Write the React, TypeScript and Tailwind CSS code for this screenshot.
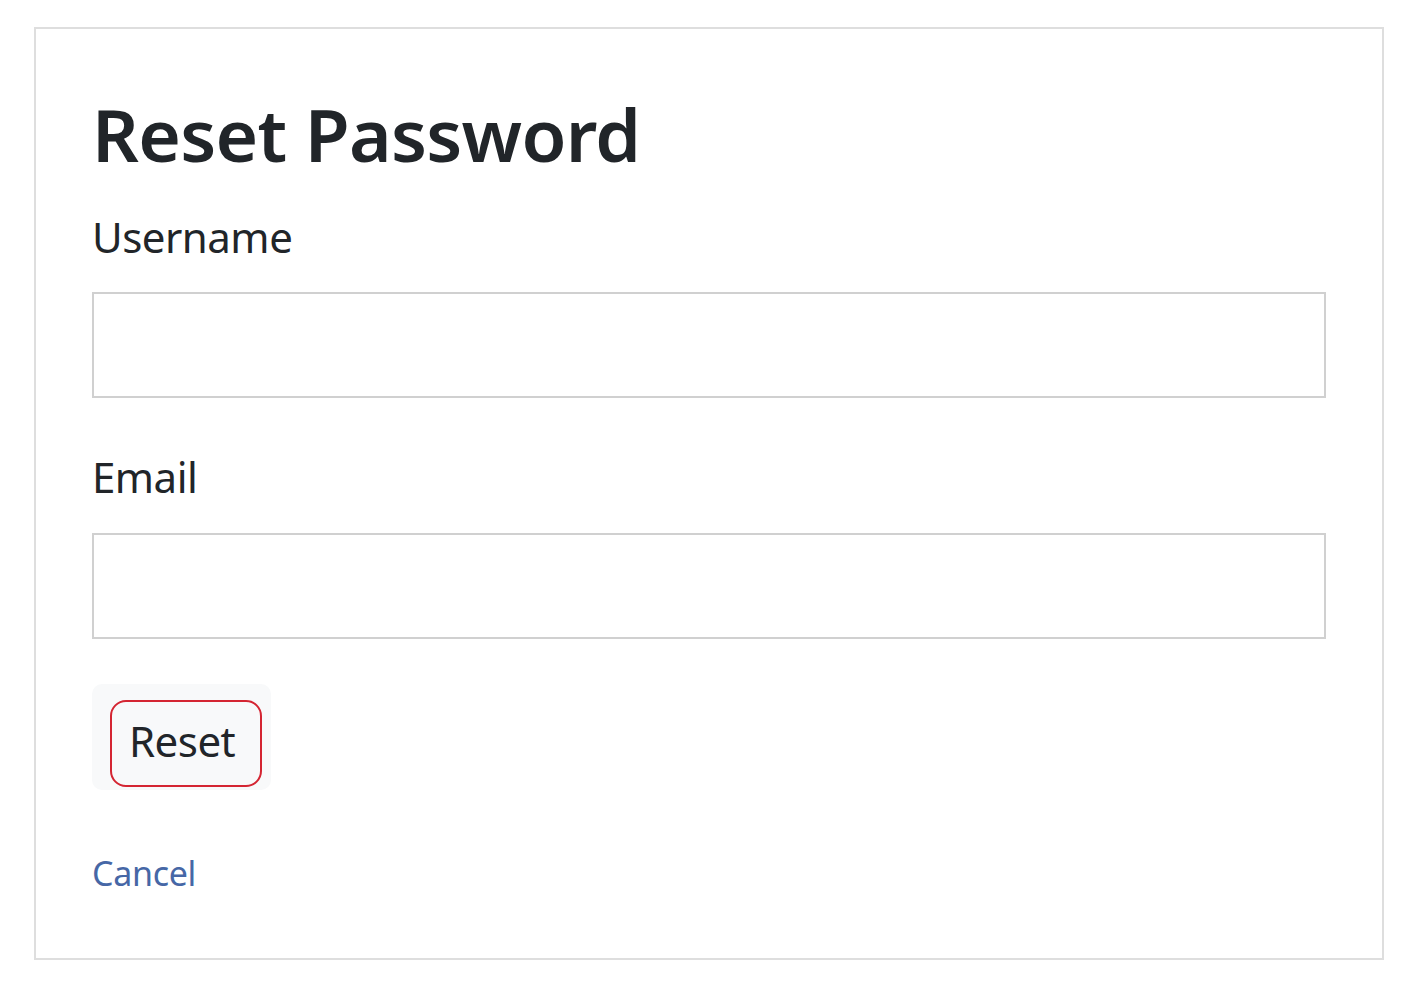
export default function App() {
  return (
    <div className="min-h-screen bg-white pl-[34px] pt-[27px] font-['Noto_Sans',sans-serif] text-[#212529]">
      <div className="flex h-[933px] w-[1350px] flex-col border-2 border-[#dedede] px-[56px] pt-[68px]">
        <h1 className="text-[73px] font-semibold leading-none tracking-[-0.7px]">Reset Password</h1>
        <form className="mt-[46px] flex flex-col">
          <label htmlFor="username" className="text-[42px] leading-none tracking-[-0.5px]">Username</label>
          <input id="username" type="text" className="mt-[34px] h-[106px] w-full border-2 border-[#d0d0d0] bg-white px-4 text-[40px] outline-none" />
          <label htmlFor="email" className="mt-[58px] text-[42px] leading-none tracking-[-0.5px]">Email</label>
          <input id="email" type="email" className="mt-[35px] h-[106px] w-full border-2 border-[#d0d0d0] bg-white px-4 text-[40px] outline-none" />
          <div className="mt-[45px] flex">
            <div className="rounded-[10px] bg-[#f8f9fa] pb-[3px] pl-[18px] pr-[9px] pt-[16px]">
              <button type="button" className="h-[87px] w-[152px] rounded-[16px] border-2 border-[#d42532] bg-transparent pb-[6px] pl-[17px] text-left text-[42px] leading-none tracking-[-0.5px] text-[#212529]">
                Reset
              </button>
            </div>
          </div>
          <a href="#" className="mt-[66px] self-start text-[34px] leading-none tracking-[-0.3px] text-[#4667a6]">Cancel</a>
        </form>
      </div>
    </div>
  )
}
